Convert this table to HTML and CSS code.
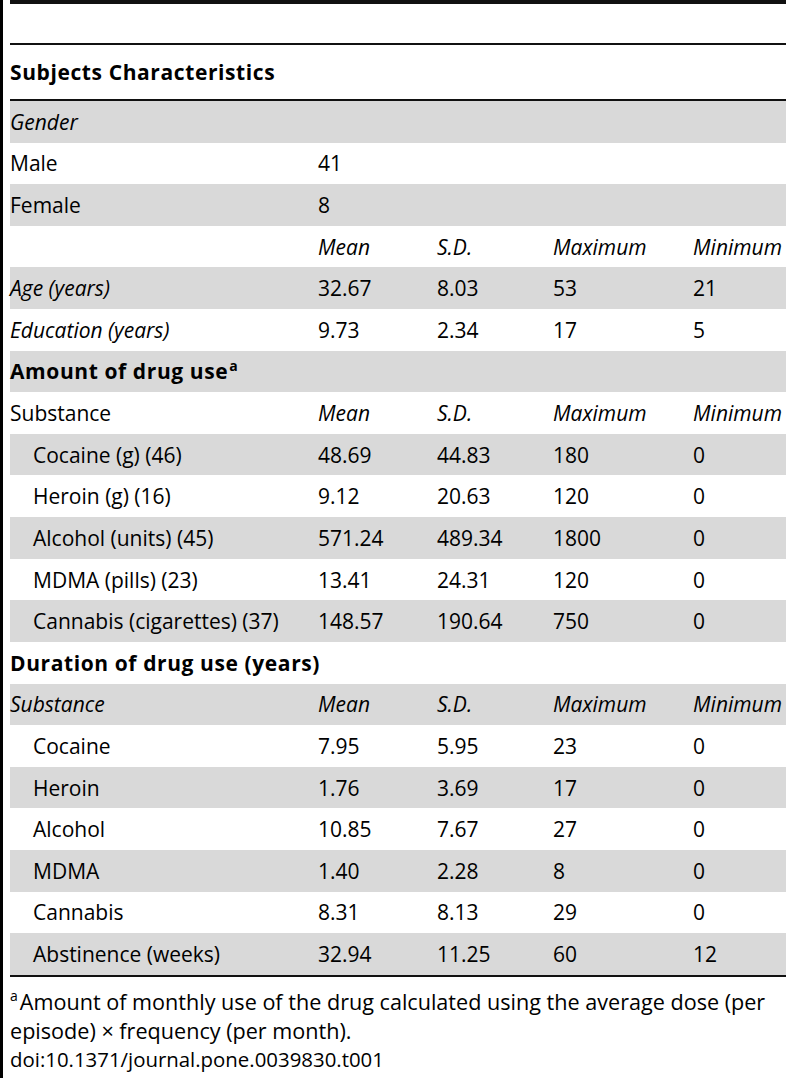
FILE: index.html
```html
<!DOCTYPE html>
<html>
<head>
<meta charset="utf-8">
<link rel="stylesheet" href="styles.css">
</head>
<body>
<div class="page">
  <div class="top-rule"></div>
  <div class="gap"></div>
  <div class="rule"></div>
  <div class="title-row"><span class="bold">Subjects Characteristics</span></div>
  <div class="rule"></div>
  <div class="rows">
    <div class="row shade"><span class="it">Gender</span></div>
    <div class="row"><span>Male</span><span>41</span></div>
    <div class="row shade"><span>Female</span><span>8</span></div>
    <div class="row"><span></span><span class="it">Mean</span><span class="it">S.D.</span><span class="it">Maximum</span><span class="it">Minimum</span></div>
    <div class="row shade"><span class="it">Age (years)</span><span>32.67</span><span>8.03</span><span>53</span><span>21</span></div>
    <div class="row"><span class="it">Education (years)</span><span>9.73</span><span>2.34</span><span>17</span><span>5</span></div>
    <div class="row shade"><span class="bold">Amount of drug use<sup class="sup">a</sup></span></div>
    <div class="row"><span>Substance</span><span class="it">Mean</span><span class="it">S.D.</span><span class="it">Maximum</span><span class="it">Minimum</span></div>
    <div class="row shade"><span class="ind">Cocaine (g) (46)</span><span>48.69</span><span>44.83</span><span>180</span><span>0</span></div>
    <div class="row"><span class="ind">Heroin (g) (16)</span><span>9.12</span><span>20.63</span><span>120</span><span>0</span></div>
    <div class="row shade"><span class="ind">Alcohol (units) (45)</span><span>571.24</span><span>489.34</span><span>1800</span><span>0</span></div>
    <div class="row"><span class="ind">MDMA (pills) (23)</span><span>13.41</span><span>24.31</span><span>120</span><span>0</span></div>
    <div class="row shade"><span class="ind">Cannabis (cigarettes) (37)</span><span>148.57</span><span>190.64</span><span>750</span><span>0</span></div>
    <div class="row"><span class="bold">Duration of drug use (years)</span></div>
    <div class="row shade"><span class="it">Substance</span><span class="it">Mean</span><span class="it">S.D.</span><span class="it">Maximum</span><span class="it">Minimum</span></div>
    <div class="row"><span class="ind">Cocaine</span><span>7.95</span><span>5.95</span><span>23</span><span>0</span></div>
    <div class="row shade"><span class="ind">Heroin</span><span>1.76</span><span>3.69</span><span>17</span><span>0</span></div>
    <div class="row"><span class="ind">Alcohol</span><span>10.85</span><span>7.67</span><span>27</span><span>0</span></div>
    <div class="row shade"><span class="ind">MDMA</span><span>1.40</span><span>2.28</span><span>8</span><span>0</span></div>
    <div class="row"><span class="ind">Cannabis</span><span>8.31</span><span>8.13</span><span>29</span><span>0</span></div>
    <div class="row shade"><span class="ind">Abstinence (weeks)</span><span>32.94</span><span>11.25</span><span>60</span><span>12</span></div>
  </div>
  <div class="rule"></div>
  <div class="notes">
    <div class="note"><sup class="sup-note">a</sup><span>Amount of monthly use of the drug calculated using the average dose (per</span></div>
    <div class="note"><span>episode) &times; frequency (per month).</span></div>
    <div class="note doi">doi:10.1371/journal.pone.0039830.t001</div>
  </div>
</div>
</body>
</html>
```

FILE: styles.css
```css
html, body {
  margin: 0;
  padding: 0;
  background: #fff;
  overflow: hidden;
}
body {
  font-family: "Open Sans", "Noto Sans", sans-serif;
  font-size: 21px;
  color: #000;
}
.page {
  border-left: 3px solid #000;
  padding-left: 7px;
  min-height: 1078px;
  box-sizing: border-box;
}
.top-rule {
  height: 4px;
  background: #111;
}
.gap {
  height: 39px;
}
.rule {
  height: 2px;
  background: #111;
}
.title-row {
  height: 54px;
  display: flex;
  align-items: center;
}
.rows {
  display: flex;
  flex-direction: column;
}
.row {
  display: grid;
  grid-template-columns: 308px 119px 116px 140px 1fr;
  align-items: center;
  height: 41.62px;
  white-space: nowrap;
}
.row > span {
  white-space: nowrap;
}
.shade {
  background: #d9d9d9;
}
.it {
  font-style: italic;
}
.bold {
  font-weight: 700;
  letter-spacing: 0.6px;
}
.ind {
  padding-left: 23px;
}
.sup {
  font-size: 14px;
  vertical-align: 8px;
  line-height: 0;
  margin-left: 1px;
}
.notes {
  padding-top: 10px;
}
.note {
  margin: 0;
  line-height: 29px;
  font-size: 21.6px;
  white-space: nowrap;
}
.doi {
  font-size: 20.4px;
}
.sup-note {
  font-size: 14px;
  line-height: 0;
  vertical-align: 9px;
  margin-right: 2px;
}
```
